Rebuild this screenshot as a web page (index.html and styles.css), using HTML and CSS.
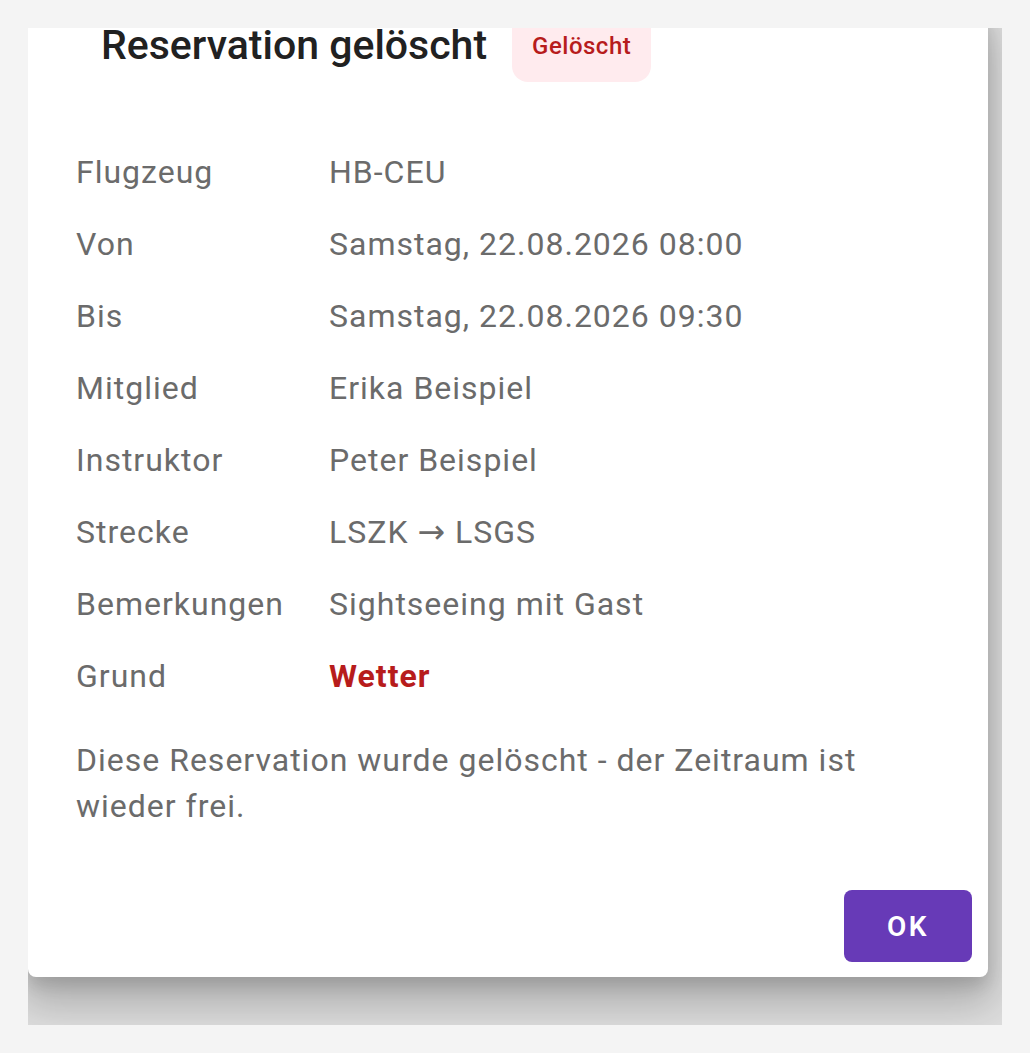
FILE: index.html
```html
<!DOCTYPE html>
<html lang="de">
<head>
    <meta charset="UTF-8">
    <meta name="viewport" content="width=device-width, initial-scale=1.0">
    <title>Reservation gelöscht</title>
    <link rel="stylesheet" href="styles.css">
</head>
<body>
    <div class="frame">
        <div class="dialog">
            <!-- Header -->
            <div class="dialog-header">
                <h2 class="dialog-title">Reservation gelöscht</h2>
                <span class="status-badge">Gelöscht</span>
            </div>

            <!-- Details -->
            <div class="dialog-content">
                <div class="detail-row">
                    <div class="detail-label">Flugzeug</div>
                    <div class="detail-value">HB-CEU</div>
                </div>
                <div class="detail-row">
                    <div class="detail-label">Von</div>
                    <div class="detail-value">Samstag, 22.08.2026 08:00</div>
                </div>
                <div class="detail-row">
                    <div class="detail-label">Bis</div>
                    <div class="detail-value">Samstag, 22.08.2026 09:30</div>
                </div>
                <div class="detail-row">
                    <div class="detail-label">Mitglied</div>
                    <div class="detail-value">Erika Beispiel</div>
                </div>
                <div class="detail-row">
                    <div class="detail-label">Instruktor</div>
                    <div class="detail-value">Peter Beispiel</div>
                </div>
                <div class="detail-row">
                    <div class="detail-label">Strecke</div>
                    <div class="detail-value">LSZK <span class="arrow">→</span> LSGS</div>
                </div>
                <div class="detail-row">
                    <div class="detail-label">Bemerkungen</div>
                    <div class="detail-value">Sightseeing mit Gast</div>
                </div>
                <div class="detail-row">
                    <div class="detail-label">Grund</div>
                    <div class="detail-value reason">Wetter</div>
                </div>

                <p class="dialog-note">Diese Reservation wurde gelöscht - der Zeitraum ist wieder frei.</p>
            </div>

            <!-- Actions -->
            <div class="dialog-actions">
                <button class="ok-button">OK</button>
            </div>
        </div>
    </div>
</body>
</html>
```

FILE: styles.css
```css
body {
    margin: 0;
    padding: 28px;
    background-color: #f4f4f4;
    font-family: 'Roboto', 'Liberation Sans', sans-serif;
}
.frame {
    width: 974px;
    height: 997px;
    overflow: hidden;
    background-color: #dedede;
}
.dialog {
    width: 960px;
    margin-top: -19px;
    background-color: white;
    border-radius: 8px;
    box-shadow: 0 22px 40px 6px rgba(0, 0, 0, 0.22), 0 8px 16px rgba(0, 0, 0, 0.12);
}
.dialog-header {
    display: flex;
    align-items: stretch;
    gap: 25px;
    height: 72px;
    padding-left: 73px;
}
.dialog-title {
    margin: 0;
    font-size: 41px;
    font-weight: 500;
    line-height: 72px;
    color: #212121;
}
.status-badge {
    display: flex;
    align-items: center;
    padding: 0 20px;
    background-color: #ffebee;
    color: #b71c1c;
    font-size: 24px;
    font-weight: 500;
    letter-spacing: 0.5px;
    border-radius: 0 0 16px 16px;
    margin-bottom: -1px;
}
.dialog-content {
    padding: 55px 48px 0;
}
.detail-row {
    display: grid;
    grid-template-columns: 253px 1fr;
    padding: 12px 0;
    font-size: 32px;
    line-height: 48px;
    letter-spacing: 1px;
    color: #6b6b6b;
}
.arrow {
    font-family: 'DejaVu Sans', sans-serif;
    font-size: 33px;
    line-height: 1;
}
.detail-value.reason {
    color: #b71c1c;
    font-weight: 700;
}
.dialog-note {
    margin: 25px 0 0;
    font-size: 32px;
    line-height: 46px;
    letter-spacing: 1px;
    color: #6b6b6b;
}
.dialog-actions {
    display: flex;
    justify-content: flex-end;
    padding: 61px 16px 15px;
}
.ok-button {
    min-width: 128px;
    height: 72px;
    border: none;
    border-radius: 8px;
    background-color: #673ab7;
    color: white;
    font-family: 'Roboto', 'Liberation Sans', sans-serif;
    font-size: 28px;
    font-weight: 600;
    letter-spacing: 2.5px;
    cursor: pointer;
}
```
